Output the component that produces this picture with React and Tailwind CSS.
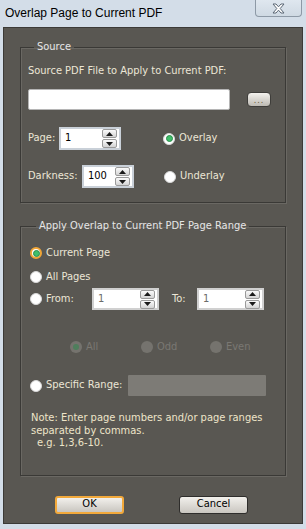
import React from "react";

const font = { fontFamily: '"DejaVu Sans Condensed", "DejaVu Sans", sans-serif' };

const Arrow = ({ up }) => (
  <svg width="7" height="4" viewBox="0 0 7 4">
    {up ? <path d="M0 4 L3.5 0 L7 4 Z" fill="#1a1a1a" /> : <path d="M0 0 L3.5 4 L7 0 Z" fill="#1a1a1a" />}
  </svg>
);

const SpinButtons = () => (
  <div className="flex flex-col gap-[1px]">
    <div className="w-[15px] h-[9px] rounded-[2px] border border-[#9a9a9a] bg-gradient-to-b from-[#fbfbfb] to-[#d4d4d4] flex items-center justify-center">
      <Arrow up />
    </div>
    <div className="w-[15px] h-[9px] rounded-[2px] border border-[#9a9a9a] bg-gradient-to-b from-[#fbfbfb] to-[#d4d4d4] flex items-center justify-center">
      <Arrow />
    </div>
  </div>
);

const Spin = ({ value, className, dim }) => (
  <div className={`flex items-center justify-between bg-white border-2 border-[#c9d0d8] pl-[4px] pr-[2px] ${className}`}>
    <span className={`text-[11px] ${dim ? "text-[#6b6b6b]" : "text-black"}`}>{value}</span>
    <SpinButtons />
  </div>
);

const Radio = ({ checked, focus, disabled }) => (
  <div
    className={`w-[12px] h-[12px] rounded-full flex items-center justify-center shrink-0 ${
      disabled
        ? "bg-[#75736e]"
        : focus
        ? "bg-white border-2 border-[#f0a536]"
        : "bg-white border border-[#d8d8d8]"
    }`}
  >
    {checked && (
      <div
        className={`rounded-full ${
          disabled ? "w-[6px] h-[6px] bg-[#4f7e5c]" : "w-[7px] h-[7px] bg-[#3fbf6a] border border-[#2a8a4a]"
        }`}
      />
    )}
  </div>
);

const Button = ({ children, focus }) => (
  <div
    className={`w-[69px] h-[18px] rounded-[3px] flex items-center justify-center text-[11px] text-black bg-gradient-to-b from-[#f2f0ec] to-[#c9c6c0] ${
      focus ? "border-2 border-[#f2a93b]" : "border border-[#2e2d2b]"
    }`}
  >
    {children}
  </div>
);

export default function App() {
  return (
    <div className="w-[306px] h-[529px] bg-[#d3dde8] flex flex-col px-[3px] pb-[5px]" style={font}>
      <div className="h-[27px] flex items-start justify-between shrink-0">
        <span
          className="ml-[2px] mt-[6px] text-[12px] leading-[14px] text-black"
          style={{ fontFamily: '"Liberation Sans", Arial, sans-serif' }}
        >
          Overlap Page to Current PDF
        </span>
        <div className="w-[47px] h-[17px] mr-[1px] border border-t-0 border-[#8d99a6] rounded-b-[4px] bg-gradient-to-b from-[#dfe7ef] to-[#cfd9e3] flex items-center justify-center">
          <svg width="13" height="11" viewBox="0 0 13 11">
            <path
              d="M1 1 L4 1 L6.5 3.8 L9 1 L12 1 L8.2 5.5 L12 10 L9 10 L6.5 7.2 L4 10 L1 10 L4.8 5.5 Z"
              fill="#ffffff"
              stroke="#5a6674"
              strokeWidth="1"
              strokeLinejoin="round"
            />
          </svg>
        </div>
      </div>

      <div className="flex-1 bg-[#595752] border border-[#3b3a37] px-[16px] pt-[12px] flex flex-col">
        {/* Source */}
        <fieldset className="border border-[#3a3936] shadow-[inset_1px_1px_0_#6a6863,1px_1px_0_#6a6863] px-[7px] pb-[14px]">
          <legend className="ml-[6px] px-[3px] text-[11px] leading-[14px] text-[#e6e6e6]">Source</legend>
          <div className="mt-[10px] text-[11px] leading-[14px] text-[#ece6d6]">Source PDF File to Apply to Current PDF:</div>
          <div className="mt-[11px] flex items-center">
            <div className="w-[202px] h-[21px] bg-white border border-[#b5b5b5] rounded-[2px]" />
            <div className="ml-[17px] w-[24px] h-[15px] rounded-[4px] border border-[#3e3d3a] bg-gradient-to-b from-[#f4f2ee] to-[#bdbab3] flex items-end justify-center pb-[2px]">
              <span className="text-[9px] leading-[8px] text-[#6b5a3a] tracking-[1px]">...</span>
            </div>
          </div>
          <div className="mt-[17px] flex items-center h-[23px]">
            <span className="w-[31px] text-[11px] text-[#ece6d6]">Page:</span>
            <Spin value="1" className="w-[62px] h-[23px]" />
            <div className="ml-[42px] flex items-center gap-[4px]">
              <Radio checked />
              <span className="text-[11px] text-[#ece6d6]">Overlay</span>
            </div>
          </div>
          <div className="mt-[15px] flex items-center h-[23px]">
            <span className="w-[54px] text-[11px] text-[#ece6d6]">Darkness:</span>
            <Spin value="100" className="w-[52px] h-[23px]" />
            <div className="ml-[30px] flex items-center gap-[4px]">
              <Radio />
              <span className="text-[11px] text-[#ece6d6]">Underlay</span>
            </div>
          </div>
        </fieldset>

        {/* Range */}
        <fieldset className="mt-[16px] border border-[#3a3936] shadow-[inset_1px_1px_0_#6a6863,1px_1px_0_#6a6863] px-[9px] pb-[25px]">
          <legend className="ml-[6px] px-[3px] text-[11px] leading-[14px] text-[#e6e6e6]">
            Apply Overlap to Current PDF Page Range
          </legend>
          <div className="mt-[13px] flex items-center gap-[4px] h-[14px]">
            <Radio checked focus />
            <span className="text-[11px] text-[#ece6d6]">Current Page</span>
          </div>
          <div className="mt-[10px] flex items-center gap-[4px] h-[14px]">
            <Radio />
            <span className="text-[11px] text-[#ece6d6]">All Pages</span>
          </div>
          <div className="mt-[4px] flex items-center h-[22px]">
            <Radio />
            <span className="ml-[4px] w-[46px] text-[11px] text-[#ece6d6]">From:</span>
            <Spin value="1" dim className="w-[67px] h-[22px] !border-[#d0d0d0]" />
            <span className="ml-[13px] w-[25px] text-[11px] text-[#ece6d6]">To:</span>
            <Spin value="1" dim className="w-[67px] h-[22px] !border-[#d0d0d0]" />
          </div>
          <div className="mt-[30px] flex items-center h-[14px] pl-[40px]">
            <Radio checked disabled />
            <span className="ml-[4px] w-[55px] text-[11px] text-[#7a7873]">All</span>
            <Radio disabled />
            <span className="ml-[4px] w-[53px] text-[11px] text-[#7a7873]">Odd</span>
            <Radio disabled />
            <span className="ml-[4px] text-[11px] text-[#7a7873]">Even</span>
          </div>
          <div className="mt-[21px] flex items-center h-[21px]">
            <Radio />
            <span className="ml-[4px] w-[82px] text-[11px] text-[#ece6d6]">Specific Range:</span>
            <div className="w-[138px] h-[21px] bg-[#7d7b76] rounded-[1px]" />
          </div>
          <div className="mt-[16px] text-[11px] leading-[12.5px] text-[#eee5c9] pl-[1px]">
            <div>Note: Enter page numbers and/or page ranges</div>
            <div>separated by commas.</div>
            <div className="pl-[6px]">e.g. 1,3,6-10.</div>
          </div>
        </fieldset>

        <div className="mt-[20px] flex justify-between pl-[35px] pr-[38px]">
          <Button focus>OK</Button>
          <Button>Cancel</Button>
        </div>
      </div>
    </div>
  );
}
